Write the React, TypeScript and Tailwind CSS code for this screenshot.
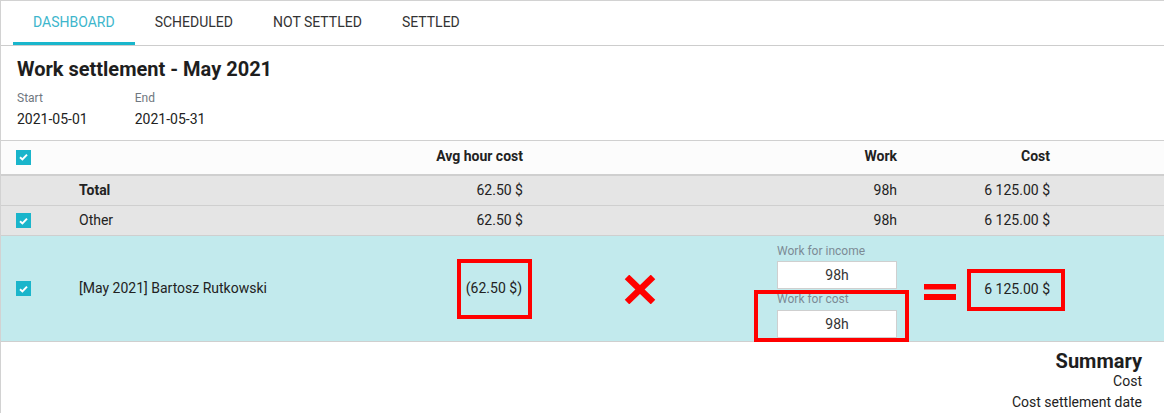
import React from "react";

const cols = "grid grid-cols-[62px_337px_131px_229px_145px_153px_1fr]";

const Check = () => (
  <span className="flex h-[15px] w-[15px] items-center justify-center bg-[#1ab5cb]">
    <svg width="9" height="8" viewBox="0 0 9 8">
      <path d="M1 4.3 L3.4 6.4 L8 1.6" fill="none" stroke="#fff" strokeWidth="2" />
    </svg>
  </span>
);

const tabs = ["DASHBOARD", "SCHEDULED", "NOT SETTLED", "SETTLED"];

const WorkInput = ({ value }: { value: string }) => (
  <div className="flex h-[28px] w-[120px] items-center justify-center border border-[#cfcfcf] bg-white text-[14px] text-[#333]">
    {value}
  </div>
);

export default function App() {
  return (
    <div
      className="h-[413px] w-[1164px] overflow-hidden border-l border-t border-[#d2d2d2] bg-white text-[#222]"
      style={{ fontFamily: "Roboto, 'Liberation Sans', sans-serif" }}
    >
      {/* tabs */}
      <div className="flex h-[45px] border-b border-[#cdcdcd] pl-[12px]">
        {tabs.map((t, i) => (
          <div
            key={t}
            className={
              i === 0
                ? "flex items-center border-b-[3px] border-[#19b6cc] px-[20px] pt-[1px] text-[14px] text-[#3db6cc]"
                : "flex items-center px-[20px] pb-[2px] text-[14px] text-[#333]"
            }
          >
            {t}
          </div>
        ))}
      </div>

      {/* heading */}
      <div className="h-[94px] px-[16px] pt-[11px]">
        <h1 className="text-[20px] font-bold leading-[24px] text-[#1e1e1e]">Work settlement - May 2021</h1>
        <div className="mt-[10px] flex gap-[47px]">
          <div>
            <div className="text-[12px] leading-[15px] text-[#6f7780]">Start</div>
            <div className="mt-[3px] text-[14px] leading-[20px]">2021-05-01</div>
          </div>
          <div>
            <div className="text-[12px] leading-[15px] text-[#6f7780]">End</div>
            <div className="mt-[3px] text-[14px] leading-[20px]">2021-05-31</div>
          </div>
        </div>
      </div>

      {/* table */}
      <div className="border-t border-[#d0d0d0] text-[14px]">
        <div className={`${cols} h-[35px] border-b-2 border-[#cfcfcf] bg-[#fcfcfc] font-bold`}>
          <div className="flex items-center pl-[15px] pb-[1px]">
            <Check />
          </div>
          <div />
          <div className="flex items-center justify-end pr-[8px] pb-[3px]">Avg hour cost</div>
          <div />
          <div className="flex items-center justify-end pr-[8px] pb-[3px]">Work</div>
          <div className="flex items-center justify-end pr-[8px] pb-[3px]">Cost</div>
          <div />
        </div>

        <div className={`${cols} h-[30px] border-b border-[#cfcfcf] bg-[#e5e5e5]`}>
          <div />
          <div className="flex items-center pl-[16px] font-bold">Total</div>
          <div className="flex items-center justify-end pr-[8px]">62.50 $</div>
          <div />
          <div className="flex items-center justify-end pr-[8px]">98h</div>
          <div className="flex items-center justify-end pr-[8px]">6 125.00 $</div>
          <div />
        </div>

        <div className={`${cols} h-[30px] border-b border-[#cfcfcf] bg-[#e5e5e5]`}>
          <div className="flex items-center pl-[15px]">
            <Check />
          </div>
          <div className="flex items-center pl-[16px]">Other</div>
          <div className="flex items-center justify-end pr-[8px]">62.50 $</div>
          <div />
          <div className="flex items-center justify-end pr-[8px]">98h</div>
          <div className="flex items-center justify-end pr-[8px]">6 125.00 $</div>
          <div />
        </div>

        <div className={`${cols} h-[106px] border-b border-[#cfcfcf] bg-[#c2eaed]`}>
          <div className="flex items-center pl-[15px]">
            <Check />
          </div>
          <div className="flex items-center pl-[16px]">[May 2021] Bartosz Rutkowski</div>
          <div className="flex items-center justify-end">
            <div className="-mr-[1px] flex h-[60px] w-[75px] items-center justify-end border-4 border-[#ff0000] pr-[6px]">
              (62.50 $)
            </div>
          </div>
          <div className="flex items-center pl-[93px] pt-[1px]">
            <svg width="32" height="29" viewBox="0 0 32 29">
              <path d="M3 2 L29 27 M29 2 L3 27" stroke="#ff0000" strokeWidth="6.5" />
            </svg>
          </div>
          <div className="relative flex flex-col items-end pr-[8px] pt-[8px]">
            <div className="w-[120px] text-[12px] leading-[15px] text-[#7c8a95]">Work for income</div>
            <div className="mt-[2px]">
              <WorkInput value="98h" />
            </div>
            <div className="mt-[2px] w-[120px] text-[12px] leading-[17px] text-[#7c8a95]">Work for cost</div>
            <div className="mt-[2px]">
              <WorkInput value="98h" />
            </div>
            <div className="absolute left-[-6px] top-[54px] h-[52px] w-[155px] border-4 border-[#ff0000]" />
          </div>
          <div className="col-span-2 flex items-center pl-[19px]">
            <svg width="32" height="17" viewBox="0 0 32 17" className="mt-[7px]">
              <rect x="0" y="0" width="32" height="5.5" fill="#ff0000" />
              <rect x="0" y="10" width="32" height="6" fill="#ff0000" />
            </svg>
            <div className="ml-[11px] mt-[3px] flex h-[42px] w-[98px] items-center justify-end border-4 border-[#ff0000] pr-[11px] pb-[2px]">
              6 125.00 $
            </div>
          </div>
        </div>
      </div>

      {/* summary */}
      <div className="flex flex-col items-end pr-[22px] pt-[9px]">
        <div className="text-[20px] font-bold leading-[20px] text-[#1e1e1e]">Summary</div>
        <div className="text-[14px] leading-[20px]">Cost</div>
        <div className="mt-[1px] text-[14px] leading-[20px]">Cost settlement date</div>
      </div>
    </div>
  );
}
